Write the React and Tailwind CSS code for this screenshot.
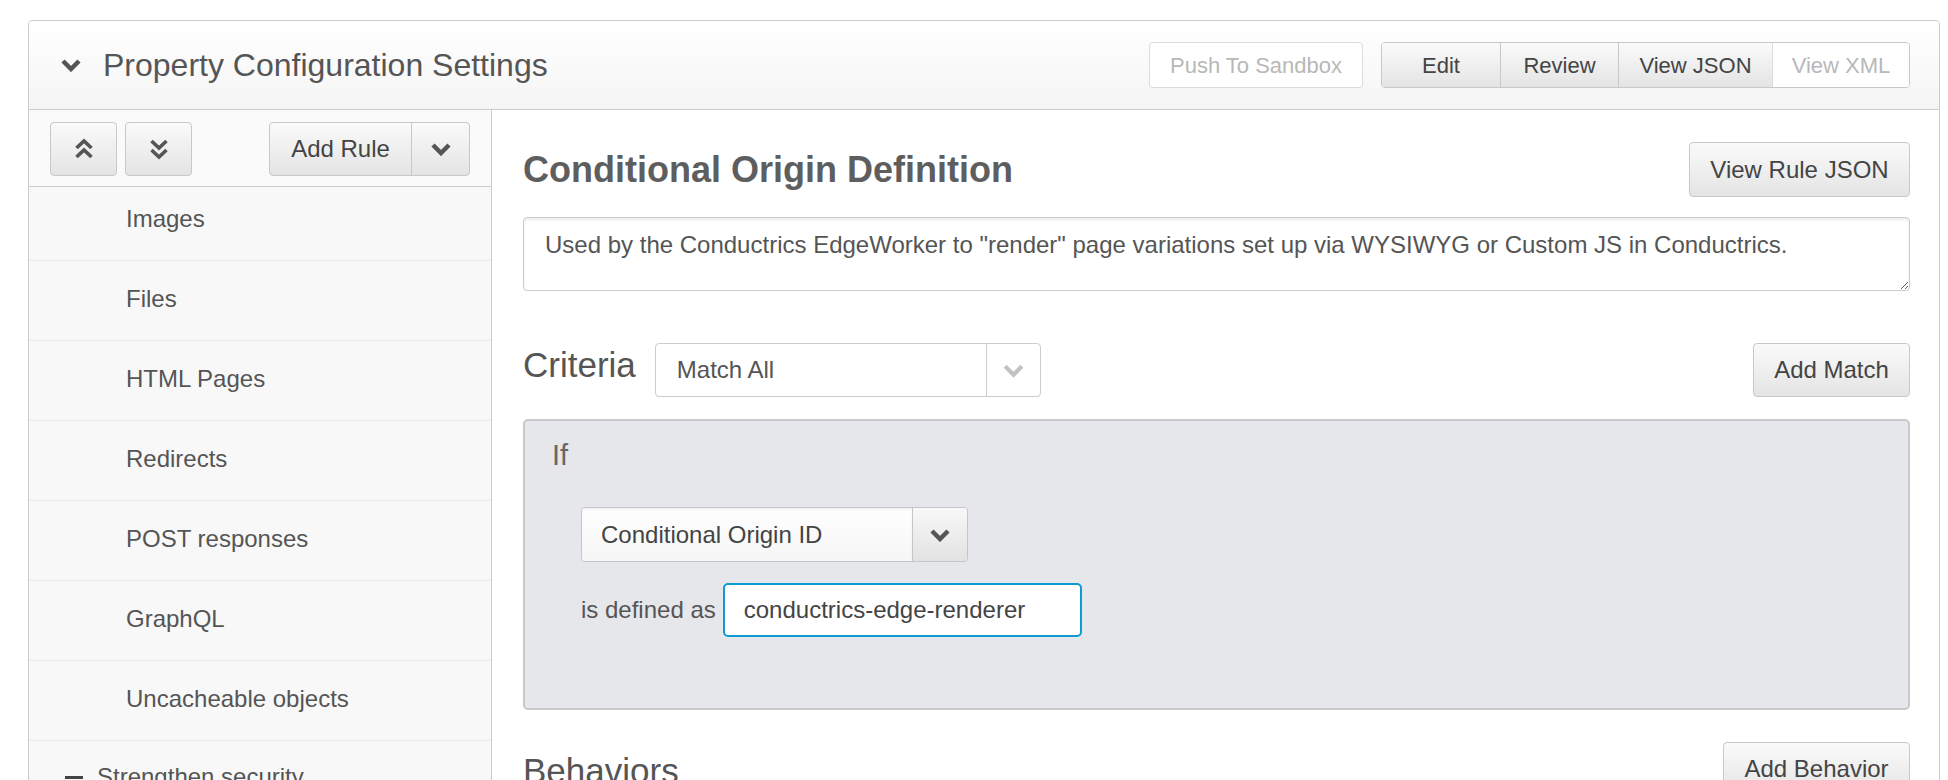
import React from "react";

const Chevron = ({ w = 22, h = 14, color = "#555", sw = 4.5 }) => (
  <svg width={w} height={h} viewBox="0 0 22 14" fill="none">
    <polyline points="3,3 11,11 19,3" stroke={color} strokeWidth={sw} strokeLinejoin="miter" strokeLinecap="butt" />
  </svg>
);

const DoubleUp = () => (
  <svg width="22" height="24" viewBox="0 0 22 24" fill="none">
    <polyline points="3.5,11 11,4 18.5,11" stroke="#555" strokeWidth="3.6" />
    <polyline points="3.5,20 11,13 18.5,20" stroke="#555" strokeWidth="3.6" />
  </svg>
);

const DoubleDown = () => (
  <svg width="22" height="24" viewBox="0 0 22 24" fill="none">
    <polyline points="3.5,4 11,11 18.5,4" stroke="#555" strokeWidth="3.6" />
    <polyline points="3.5,13 11,20 18.5,13" stroke="#555" strokeWidth="3.6" />
  </svg>
);

const items = ["Images", "Files", "HTML Pages", "Redirects", "POST responses", "GraphQL", "Uncacheable objects"];

export default function App() {
  return (
    <div className="w-[1948px] h-[780px] overflow-hidden bg-white pt-[20px] pl-[28px] font-['Liberation_Sans',Arial,sans-serif] text-[#555]">
      <div className="w-[1912px] h-[800px] border border-[#cccccc] rounded-t-[4px] flex flex-col">
        {/* Header */}
        <div className="h-[89px] shrink-0 border-b border-[#cccccc] bg-[linear-gradient(#ffffff,#f5f5f5)] flex items-center pl-[31px] pr-[29px] rounded-t-[4px]">
          <Chevron w={22} h={14} />
          <div className="ml-[21px] text-[32px] leading-none text-[#555]">Property Configuration Settings</div>
          <div className="flex-1" />
          <div className="h-[46px] w-[214px] flex items-center justify-center border border-[#dcdcdc] rounded-[4px] bg-white text-[22px] text-[#b8b8b8]">
            Push To Sandbox
          </div>
          <div className="ml-[18px] h-[46px] flex border border-[#c8c8c8] rounded-[4px] overflow-hidden text-[22px]">
            <div className="w-[119px] flex items-center justify-center bg-[linear-gradient(#fafafa,#e4e4e4)] text-[#444] border-r border-[#c8c8c8]">Edit</div>
            <div className="w-[118px] flex items-center justify-center bg-[linear-gradient(#fafafa,#e4e4e4)] text-[#444] border-r border-[#c8c8c8]">Review</div>
            <div className="w-[154px] flex items-center justify-center bg-[linear-gradient(#fafafa,#e4e4e4)] text-[#444] border-r border-[#dcdcdc]">View JSON</div>
            <div className="w-[136px] flex items-center justify-center bg-white text-[#b8b8b8]">View XML</div>
          </div>
        </div>

        {/* Body */}
        <div className="flex flex-1 min-h-0">
          {/* Sidebar */}
          <div className="w-[463px] shrink-0 border-r border-[#cccccc] bg-[#f8f8f8] flex flex-col">
            <div className="h-[77px] shrink-0 border-b border-[#cccccc] flex items-center px-[21px] pt-[2px] bg-[#fafafa]">
              <div className="w-[67px] h-[54px] flex items-center justify-center border border-[#c8c8c8] rounded-[4px] bg-[linear-gradient(#fafafa,#e4e4e4)]">
                <DoubleUp />
              </div>
              <div className="ml-[8px] w-[67px] h-[54px] flex items-center justify-center border border-[#c8c8c8] rounded-[4px] bg-[linear-gradient(#fafafa,#e4e4e4)]">
                <DoubleDown />
              </div>
              <div className="flex-1" />
              <div className="h-[54px] flex border border-[#c8c8c8] rounded-[4px] overflow-hidden bg-[linear-gradient(#fafafa,#e4e4e4)]">
                <div className="w-[142px] flex items-center justify-center text-[24px] text-[#444] border-r border-[#c8c8c8]">Add Rule</div>
                <div className="w-[57px] flex items-center justify-center">
                  <Chevron w={22} h={14} />
                </div>
              </div>
            </div>
            <div className="flex-1 overflow-hidden">
              <div className="-mt-[6px]">
                {items.map((t) => (
                  <div key={t} className="h-[80px] border-b border-[#e8e8e8] flex items-center pl-[97px] text-[24px] text-[#555] pb-[4px]">
                    {t}
                  </div>
                ))}
                <div className="h-[80px] flex items-center pl-[36px] text-[24px] text-[#555] pb-[8px]">
                  <div className="w-[18px] h-[3px] bg-[#444]" />
                  <span className="ml-[14px]">Strengthen security</span>
                </div>
              </div>
            </div>
          </div>

          {/* Main */}
          <div className="flex-1 bg-white pl-[31px] pr-[29px] pt-[32px]">
            <div className="h-[55px] flex items-center justify-between">
              <div className="text-[36px] font-bold text-[#5e5e5e] leading-none">Conditional Origin Definition</div>
              <div className="h-[55px] w-[221px] flex items-center justify-center border border-[#c8c8c8] rounded-[4px] bg-[linear-gradient(#fafafa,#e4e4e4)] text-[24px] text-[#444]">
                View Rule JSON
              </div>
            </div>

            <textarea
              readOnly
              defaultValue={'Used by the Conductrics EdgeWorker to "render" page variations set up via WYSIWYG or Custom JS in Conductrics.'}
              className="mt-[20px] block w-full h-[74px] border border-[#cccccc] rounded-[4px] shadow-[inset_0_2px_3px_rgba(0,0,0,0.08)] pl-[21px] pt-[13px] text-[24px] leading-[normal] text-[#555] outline-none bg-white font-['Liberation_Sans',Arial,sans-serif]"
            />

            <div className="mt-[52px] h-[54px] flex items-center">
              <div className="text-[35px] text-[#555] mb-[10px]">Criteria</div>
              <div className="ml-[19px] w-[386px] h-[54px] flex border border-[#cccccc] rounded-[4px] bg-white">
                <div className="flex-1 flex items-center pl-[21px] text-[24px] text-[#555]">Match All</div>
                <div className="w-[54px] border-l border-[#cccccc] flex items-center justify-center">
                  <Chevron w={23} h={15} color="#c2c2c2" sw={4} />
                </div>
              </div>
              <div className="flex-1" />
              <div className="h-[54px] w-[157px] flex items-center justify-center border border-[#c8c8c8] rounded-[4px] bg-[linear-gradient(#fafafa,#e4e4e4)] text-[24px] text-[#444]">
                Add Match
              </div>
            </div>

            <div className="mt-[22px] h-[291px] border-2 border-[#c9c9cc] rounded-[5px] bg-[#e6e7eb] pl-[27px] pt-[18px]">
              <div className="text-[29px] leading-[normal] text-[#666]">If</div>
              <div className="pl-[29px]">
                <div className="mt-[35px] w-[387px] h-[55px] flex border border-[#c6c6c6] rounded-[4px] overflow-hidden">
                  <div className="flex-1 flex items-center pl-[19px] text-[24px] text-[#444] bg-[linear-gradient(#ffffff,#f6f6f6)] shadow-[inset_0_2px_2px_rgba(0,0,0,0.05)]">
                    Conditional Origin ID
                  </div>
                  <div className="w-[55px] border-l border-[#c6c6c6] flex items-center justify-center bg-[linear-gradient(#f8f8f8,#e2e2e2)]">
                    <Chevron w={22} h={14} color="#555" sw={4.5} />
                  </div>
                </div>
                <div className="mt-[21px] flex items-center">
                  <div className="text-[24px] text-[#555]">is defined as</div>
                  <div className="ml-[7px] w-[359px] h-[54px] flex items-center pl-[19px] border-2 border-[#0e9ad3] rounded-[5px] bg-white text-[24px] text-[#444]">
                    conductrics-edge-renderer
                  </div>
                </div>
              </div>
            </div>

            <div className="mt-[32px] h-[54px] flex items-center">
              <div className="text-[35px] text-[#555] mt-[4px]">Behaviors</div>
              <div className="flex-1" />
              <div className="h-[54px] w-[187px] flex items-center justify-center border border-[#c8c8c8] rounded-[4px] bg-[linear-gradient(#fafafa,#e4e4e4)] text-[24px] text-[#444]">
                Add Behavior
              </div>
            </div>
          </div>
        </div>
      </div>
    </div>
  );
}
